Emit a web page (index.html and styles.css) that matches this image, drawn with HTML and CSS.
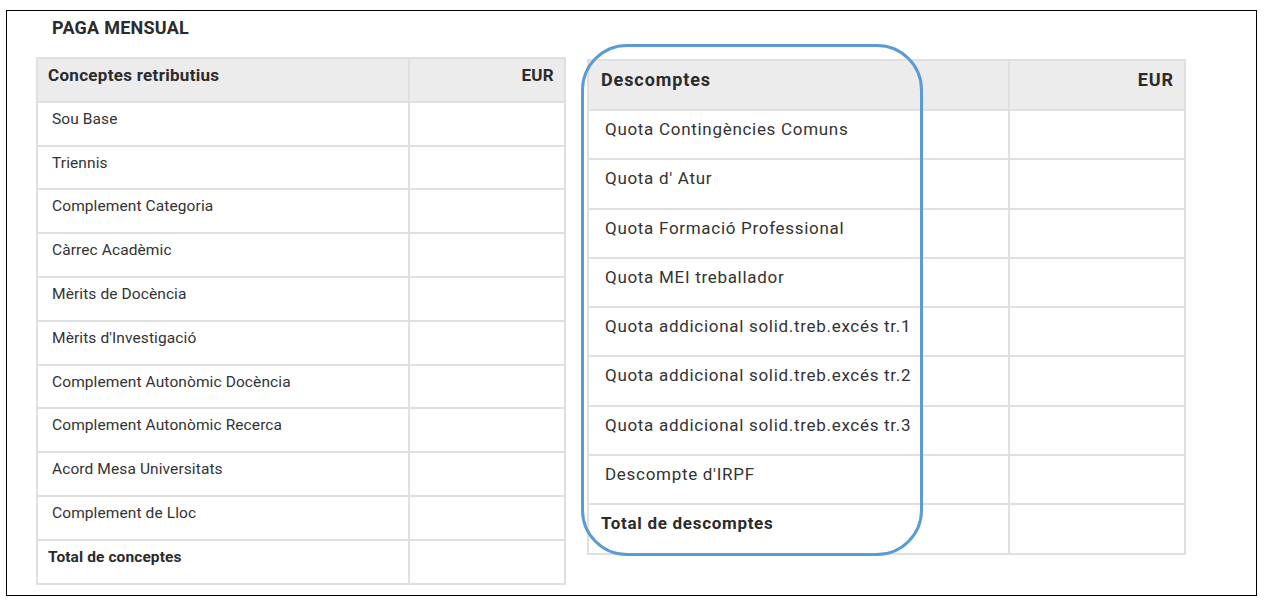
FILE: index.html
```html
<!DOCTYPE html>
<html lang="ca">
<head>
<meta charset="utf-8">
<title>Paga mensual</title>
<link rel="stylesheet" href="styles.css">
</head>
<body>
<div class="frame">
  <h1 class="title">PAGA MENSUAL</h1>
  <div class="tables">
    <table class="tbl tbl-left">
      <thead>
        <tr><th class="c1">Conceptes retributius</th><th class="c2">EUR</th></tr>
      </thead>
      <tbody>
        <tr><td>Sou Base</td><td></td></tr>
        <tr><td>Triennis</td><td></td></tr>
        <tr><td>Complement Categoria</td><td></td></tr>
        <tr><td>Càrrec Acadèmic</td><td></td></tr>
        <tr><td>Mèrits de Docència</td><td></td></tr>
        <tr><td>Mèrits d'Investigació</td><td></td></tr>
        <tr><td>Complement Autonòmic Docència</td><td></td></tr>
        <tr><td>Complement Autonòmic Recerca</td><td></td></tr>
        <tr><td>Acord Mesa Universitats</td><td></td></tr>
        <tr><td>Complement de Lloc</td><td></td></tr>
        <tr class="total"><td>Total de conceptes</td><td></td></tr>
      </tbody>
    </table>
    <div class="right-wrap">
      <table class="tbl tbl-right">
        <thead>
          <tr><th class="c1">Descomptes</th><th class="c2">EUR</th></tr>
        </thead>
        <tbody>
          <tr><td>Quota Contingències Comuns</td><td></td></tr>
          <tr><td>Quota d' Atur</td><td></td></tr>
          <tr><td>Quota Formació Professional</td><td></td></tr>
          <tr><td>Quota MEI treballador</td><td></td></tr>
          <tr><td>Quota addicional solid.treb.excés tr.1</td><td></td></tr>
          <tr><td>Quota addicional solid.treb.excés tr.2</td><td></td></tr>
          <tr><td>Quota addicional solid.treb.excés tr.3</td><td></td></tr>
          <tr><td>Descompte d'IRPF</td><td></td></tr>
          <tr class="total"><td>Total de descomptes</td><td></td></tr>
        </tbody>
      </table>
      <div class="highlight"></div>
    </div>
  </div>
</div>
</body>
</html>
```
FILE: styles.css
```css
html, body {
  margin: 0;
  padding: 0;
  background: #fff;
}
body {
  font-family: Roboto, "Liberation Sans", Arial, sans-serif;
  color: #333;
  padding: 10px 0 0 6px;
}
.frame {
  width: 1251px;
  height: 586px;
  border: 1px solid #000;
  box-sizing: border-box;
  position: relative;
}
.title {
  margin: 0;
  padding: 6px 0 0 45px;
  font-size: 18px;
  font-weight: 700;
  height: 39px;
  box-sizing: border-box;
  color: #2b2b2b;
  letter-spacing: 0.25px;
}
.tables {
  display: flex;
  align-items: flex-start;
  padding-left: 29px;
  gap: 21px;
  margin-top: 7px;
}
.tbl {
  border-collapse: collapse;
  table-layout: fixed;
}
.tbl th, .tbl td {
  border: 2px solid #e0e0e0;
  vertical-align: top;
  text-align: left;
  padding: 0;
}
.tbl th {
  background: #ececec;
  font-weight: 700;
  color: #2b2b2b;
}
.tbl th.c2 {
  text-align: right;
}
.tbl-left {
  width: 530px;
  font-size: 15.5px;
  letter-spacing: 0.1px;
}
.tbl-left .c1 { width: 372px; }
.tbl-left th {
  height: 43.8px;
  padding: 6px 10px 0 10px;
  box-sizing: border-box;
  font-size: 17px;
  letter-spacing: 0.3px;
}
.tbl-left td {
  height: 43.8px;
  box-sizing: border-box;
  padding: 7px 14px 0 14px;
}
.tbl-left .total td {
  font-weight: 700;
  padding-left: 10px;
  color: #2b2b2b;
}
.right-wrap {
  position: relative;
  margin-top: 2px;
}
.tbl-right {
  width: 599px;
  font-size: 17px;
  letter-spacing: 0.7px;
}
.tbl-right .c1 { width: 421px; }
.tbl-right th {
  height: 50px;
  padding: 8px 10px 0 12px;
  box-sizing: border-box;
  font-size: 18px;
  letter-spacing: 0.9px;
}
.tbl-right td {
  height: 49.3px;
  box-sizing: border-box;
  padding: 8px 16px 0 16px;
}
.tbl-right .total td {
  font-weight: 700;
  padding-left: 12px;
  color: #2b2b2b;
}
.highlight {
  position: absolute;
  left: -6px;
  top: -15px;
  width: 342px;
  height: 512px;
  border: 3px solid #5b9bd5;
  border-radius: 46px;
  box-sizing: border-box;
  pointer-events: none;
}
```
